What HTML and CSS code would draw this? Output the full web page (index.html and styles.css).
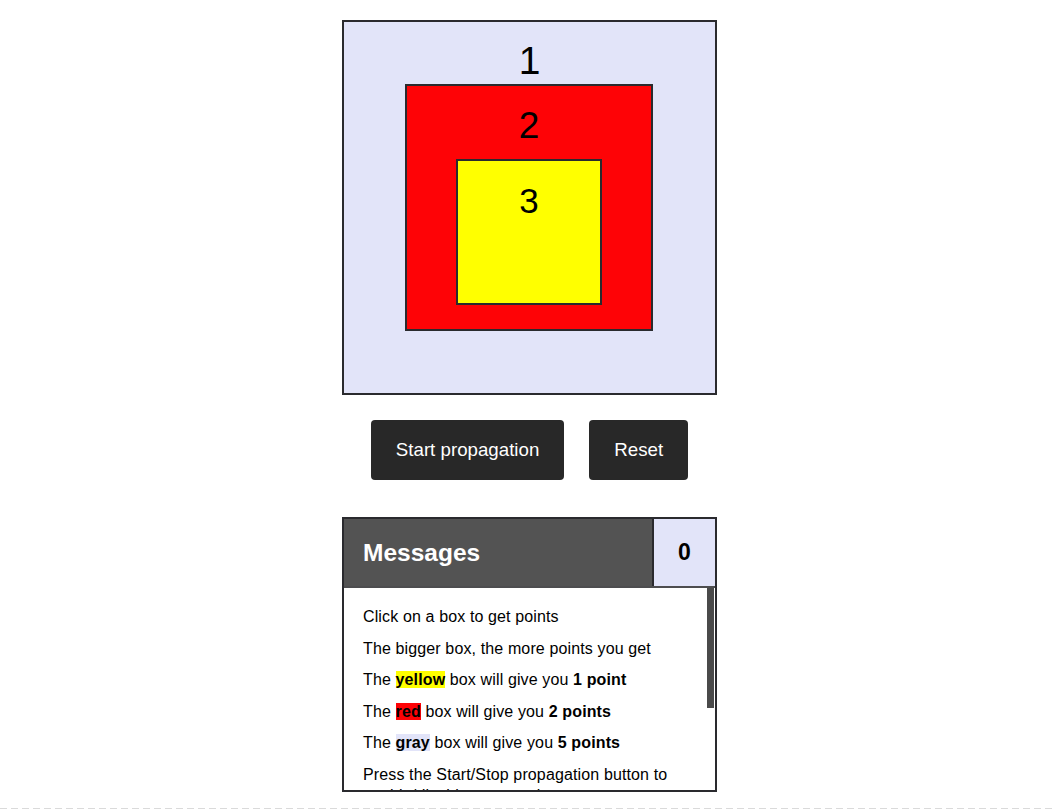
FILE: index.html
```html
<!DOCTYPE html>
<html lang="en">
<head>
<meta charset="utf-8">
<title>Event propagation</title>
<link rel="stylesheet" href="styles.css">
</head>
<body>
<div class="page">
  <div class="box box1">
    <span class="label">1</span>
    <div class="box box2">
      <span class="label">2</span>
      <div class="box box3">
        <span class="label">3</span>
      </div>
    </div>
  </div>

  <div class="controls">
    <button class="btn" type="button">Start propagation</button>
    <button class="btn" type="button">Reset</button>
  </div>

  <section class="messages">
    <header class="msg-head">
      <h2 class="msg-title">Messages</h2>
      <div class="msg-count">0</div>
    </header>
    <div class="msg-body">
      <p>Click on a box to get points</p>
      <p>The bigger box, the more points you get</p>
      <p>The <b class="hl hl-yellow">yellow</b> box will give you <b>1 point</b></p>
      <p>The <b class="hl hl-red">red</b> box will give you <b>2 points</b></p>
      <p>The <b class="hl hl-gray">gray</b> box will give you <b>5 points</b></p>
      <p>Press the Start/Stop propagation button to enable/disable propagation</p>
      <p>With propagation on, a click also reaches every box around the one you clicked</p>
      <p>Press the Reset button to start again</p>
    </div>
  </section>

  <div class="divider"></div>
</div>
</body>
</html>
```

FILE: styles.css
```css
html, body {
  margin: 0;
  padding: 0;
}

body {
  font-family: "Liberation Sans", Arial, sans-serif;
  color: #000;
  background: #fff;
}

.page {
  display: flex;
  flex-direction: column;
  align-items: center;
  padding: 20px 0 0 3px;
}

.box {
  box-sizing: border-box;
  border: 2px solid #2a2a2e;
  display: flex;
  flex-direction: column;
  align-items: center;
  flex-shrink: 0;
}

.label {
  display: block;
  font-size: 36px;
  line-height: 41px;
}

.box1 {
  width: 375px;
  height: 375px;
  background: #e2e4f9;
  padding-top: 18px;
}

.box1 .label {
  font-size: 39px;
}

.box2 {
  align-self: flex-start;
  width: 248px;
  height: 247px;
  margin: 3px 0 0 61px;
  background: #fe0306;
  padding-top: 19px;
}

.box2 .label {
  font-size: 37px;
}

.box3 {
  align-self: flex-start;
  width: 146px;
  height: 146px;
  margin: 13px 0 0 49px;
  background: #ffff00;
  padding-top: 19px;
}

.box3 .label {
  font-size: 35px;
}

.controls {
  display: flex;
  gap: 25px;
  margin-top: 25px;
}

.btn {
  height: 60px;
  padding: 0 25px;
  border: 0;
  border-radius: 4px;
  background: #282828;
  color: #fff;
  font-family: "Liberation Sans", Arial, sans-serif;
  font-size: 18.72px;
  cursor: pointer;
}

.messages {
  position: relative;
  box-sizing: border-box;
  width: 375px;
  height: 275px;
  margin-top: 37px;
  border: 2px solid #2a2a2e;
  display: flex;
  flex-direction: column;
  flex-shrink: 0;
}

/* scrollbar thumb of the message list, drawn over its right edge */
.messages::after {
  content: "";
  position: absolute;
  top: 69px;
  right: 1px;
  width: 7px;
  height: 120px;
  background: #4a4a4a;
}

.msg-head {
  display: flex;
  height: 67px;
  flex-shrink: 0;
  background: #535353;
  border-bottom: 2px solid #4d4d4f;
}

.msg-title {
  flex: 1;
  margin: 0;
  padding-left: 19px;
  display: flex;
  align-items: center;
  color: #fff;
  font-size: 24.5px;
  font-weight: bold;
}

.msg-count {
  width: 61px;
  border-left: 2px solid #2a2a2e;
  background: #e2e4f9;
  display: flex;
  align-items: center;
  justify-content: center;
  font-size: 23px;
  font-weight: bold;
}

.msg-body {
  flex: 1;
  overflow: hidden;
  padding: 19px 27px 18px 19px;
  background: #fff;
}

.msg-body p {
  margin: 0 0 10.8px;
  font-size: 16px;
  line-height: 20.8px;
  letter-spacing: 0.13px;
}

.hl {
  font-weight: bold;
}

.hl-yellow {
  background: #ffff00;
}

.hl-red {
  background: #fe0306;
}

.hl-gray {
  background: #e2e4f9;
}

.divider {
  align-self: stretch;
  margin: 16px 0 0 -3px;
  height: 1px;
  background: repeating-linear-gradient(90deg, #dadada 0 7px, transparent 7px 11px);
}
```
